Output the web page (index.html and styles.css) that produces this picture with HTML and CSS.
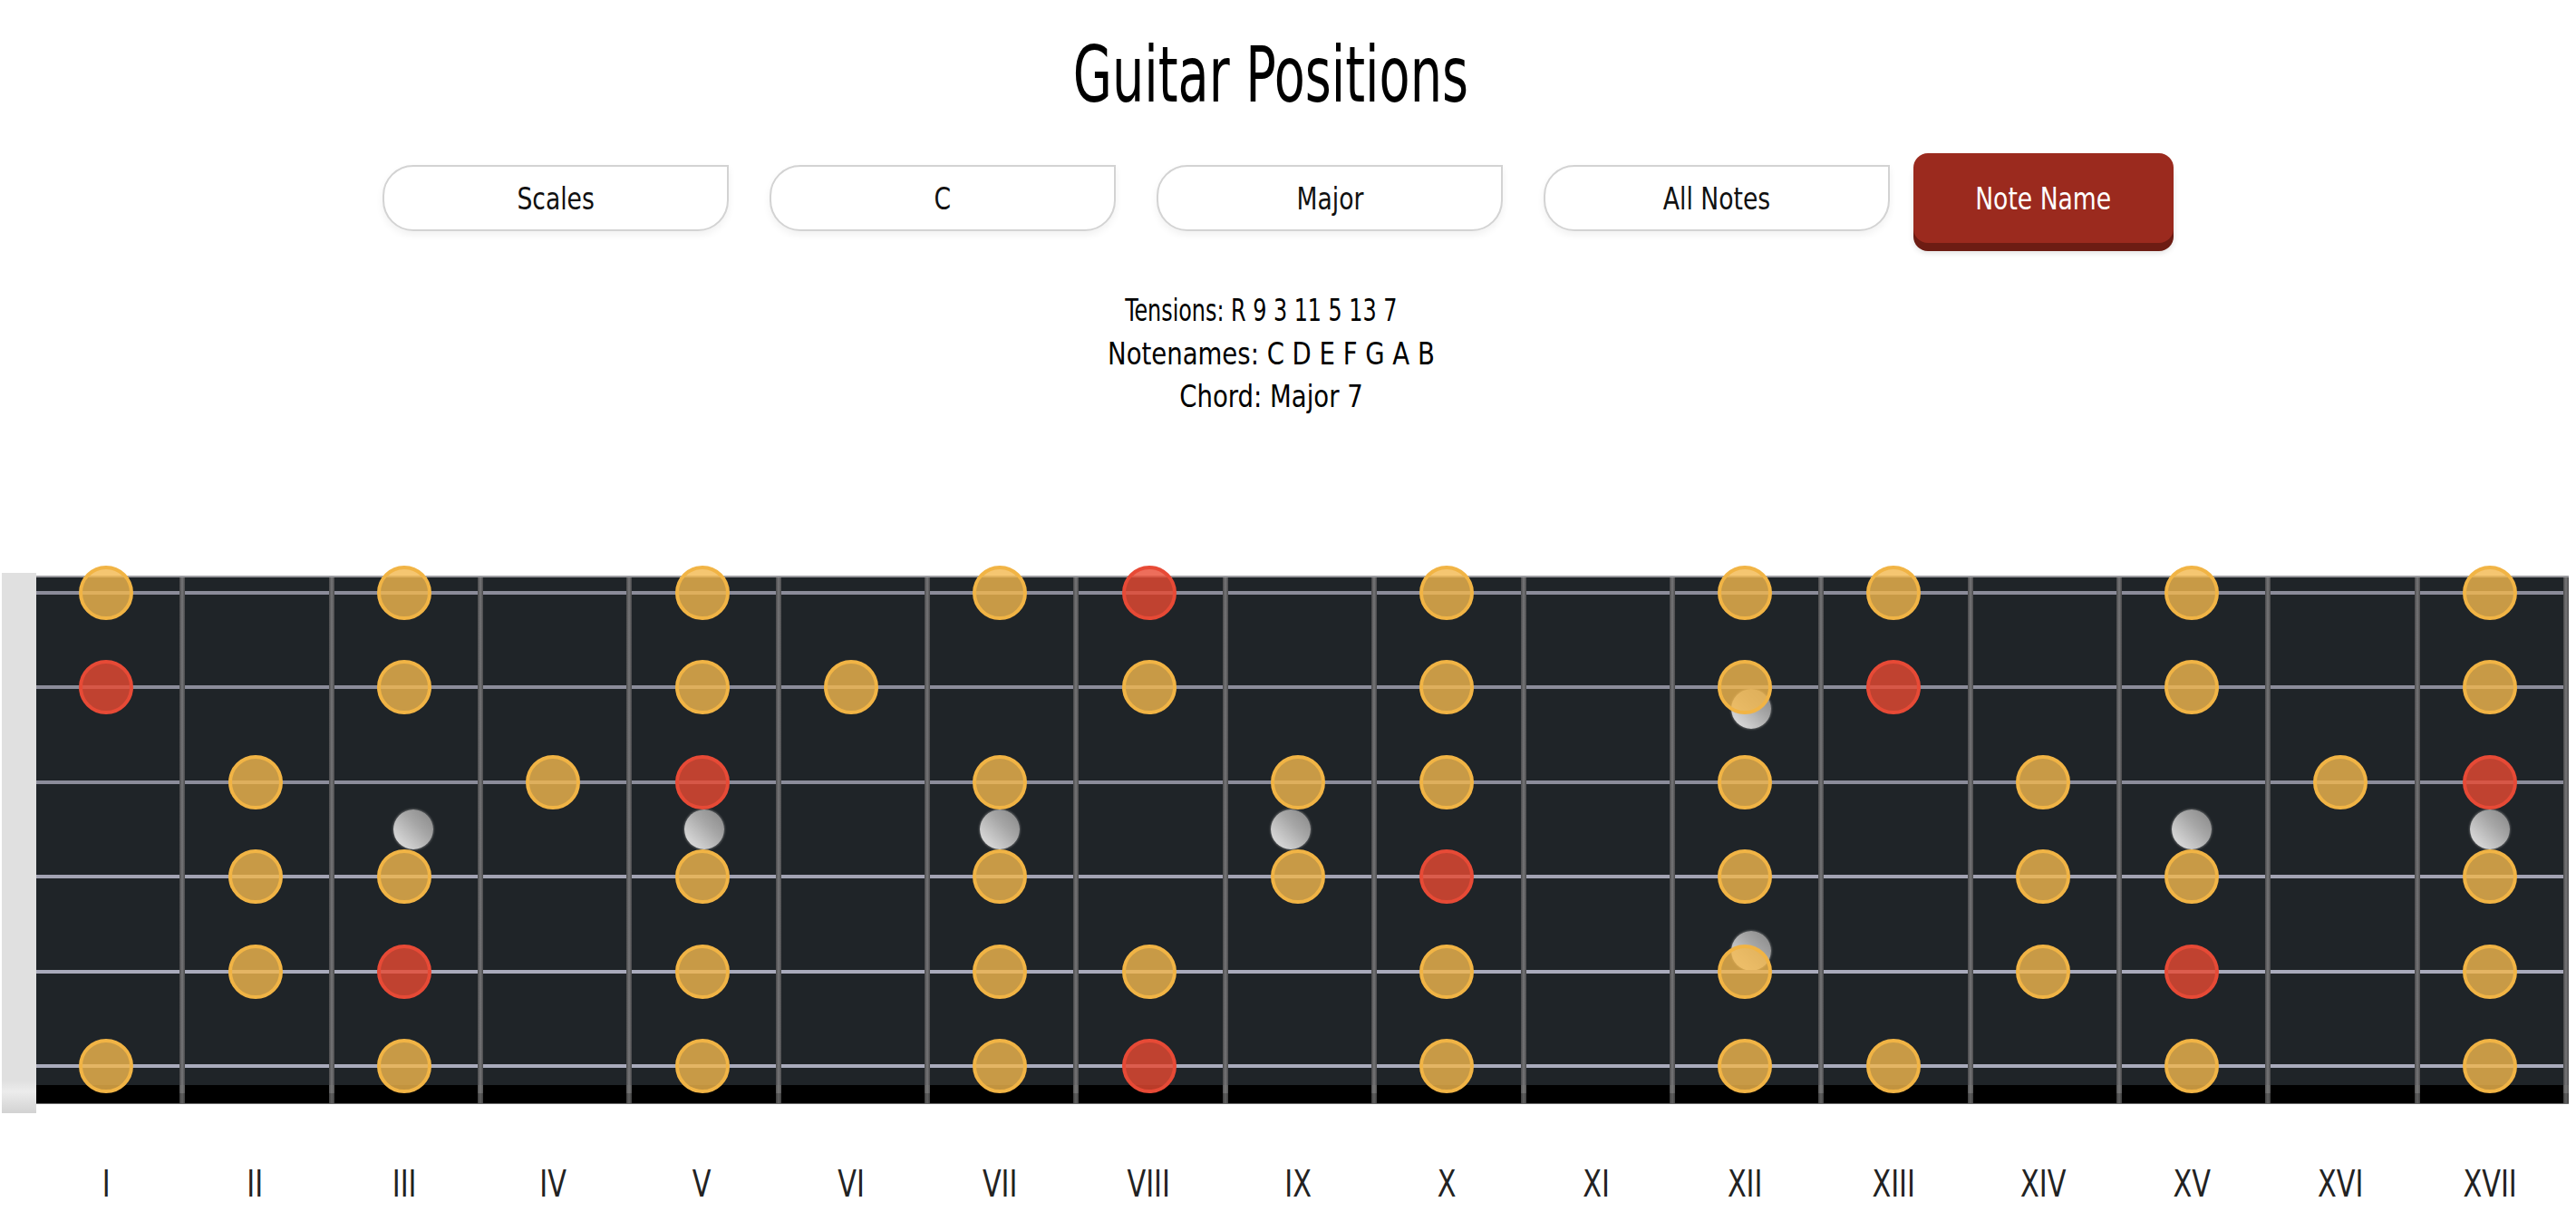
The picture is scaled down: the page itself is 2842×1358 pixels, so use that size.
FILE: index.html
```html
<!DOCTYPE html>
<html lang="en">
<head>
<meta charset="utf-8">
<title>Guitar Positions</title>
<link rel="stylesheet" href="styles.css">
</head>
<body>
<div class="top">
  <h1 class="title"><span class="sq">Guitar Positions</span></h1>
  <div class="controls">
    <button class="sel"><span class="sq">Scales</span></button>
    <button class="sel"><span class="sq">C</span></button>
    <button class="sel"><span class="sq">Major</span></button>
    <button class="sel"><span class="sq">All Notes</span></button>
    <button class="mode"><span class="sq">Note Name</span></button>
  </div>
  <div class="info">
    <div><span class="sq tight">Tensions: R 9 3 11 5 13 7</span></div>
    <div><span class="sq">Notenames: C D E F G A B</span></div>
    <div><span class="sq">Chord: Major 7</span></div>
  </div>
</div>

<div class="neck">
  <div class="nut"></div>
  <div class="board-wrap">
    <div class="board">
      <div class="row s1">
        <div class="c"><span class="dot"></span></div>
        <div class="c"></div>
        <div class="c"><span class="dot"></span></div>
        <div class="c"></div>
        <div class="c"><span class="dot"></span></div>
        <div class="c"></div>
        <div class="c"><span class="dot"></span></div>
        <div class="c"><span class="dot root"></span></div>
        <div class="c"></div>
        <div class="c"><span class="dot"></span></div>
        <div class="c"></div>
        <div class="c"><span class="dot"></span></div>
        <div class="c"><span class="dot"></span></div>
        <div class="c"></div>
        <div class="c"><span class="dot"></span></div>
        <div class="c"></div>
        <div class="c"><span class="dot"></span></div>
      </div>
      <div class="row s2">
        <div class="c"><span class="dot root"></span></div>
        <div class="c"></div>
        <div class="c"><span class="dot"></span></div>
        <div class="c"></div>
        <div class="c"><span class="dot"></span></div>
        <div class="c"><span class="dot"></span></div>
        <div class="c"></div>
        <div class="c"><span class="dot"></span></div>
        <div class="c"></div>
        <div class="c"><span class="dot"></span></div>
        <div class="c"></div>
        <div class="c"><span class="marker m-upper"></span><span class="dot"></span></div>
        <div class="c"><span class="dot root"></span></div>
        <div class="c"></div>
        <div class="c"><span class="dot"></span></div>
        <div class="c"></div>
        <div class="c"><span class="dot"></span></div>
      </div>
      <div class="row s3">
        <div class="c"></div>
        <div class="c"><span class="dot"></span></div>
        <div class="c"><span class="marker m-mid m-r10"></span></div>
        <div class="c"><span class="dot"></span></div>
        <div class="c"><span class="marker m-mid m-r2"></span><span class="dot root"></span></div>
        <div class="c"></div>
        <div class="c"><span class="marker m-mid"></span><span class="dot"></span></div>
        <div class="c"></div>
        <div class="c"><span class="marker m-mid m-l8"></span><span class="dot"></span></div>
        <div class="c"><span class="dot"></span></div>
        <div class="c"></div>
        <div class="c"><span class="dot"></span></div>
        <div class="c"></div>
        <div class="c"><span class="dot"></span></div>
        <div class="c"><span class="marker m-mid"></span></div>
        <div class="c"><span class="dot"></span></div>
        <div class="c"><span class="marker m-mid"></span><span class="dot root"></span></div>
      </div>
      <div class="row s4">
        <div class="c"></div>
        <div class="c"><span class="dot"></span></div>
        <div class="c"><span class="dot"></span></div>
        <div class="c"></div>
        <div class="c"><span class="dot"></span></div>
        <div class="c"></div>
        <div class="c"><span class="dot"></span></div>
        <div class="c"></div>
        <div class="c"><span class="dot"></span></div>
        <div class="c"><span class="dot root"></span></div>
        <div class="c"></div>
        <div class="c"><span class="marker m-lower"></span><span class="dot"></span></div>
        <div class="c"></div>
        <div class="c"><span class="dot"></span></div>
        <div class="c"><span class="dot"></span></div>
        <div class="c"></div>
        <div class="c"><span class="dot"></span></div>
      </div>
      <div class="row s5">
        <div class="c"></div>
        <div class="c"><span class="dot"></span></div>
        <div class="c"><span class="dot root"></span></div>
        <div class="c"></div>
        <div class="c"><span class="dot"></span></div>
        <div class="c"></div>
        <div class="c"><span class="dot"></span></div>
        <div class="c"><span class="dot"></span></div>
        <div class="c"></div>
        <div class="c"><span class="dot"></span></div>
        <div class="c"></div>
        <div class="c"><span class="dot"></span></div>
        <div class="c"></div>
        <div class="c"><span class="dot"></span></div>
        <div class="c"><span class="dot root"></span></div>
        <div class="c"></div>
        <div class="c"><span class="dot"></span></div>
      </div>
      <div class="row s6 last">
        <div class="c"><span class="dot"></span></div>
        <div class="c"></div>
        <div class="c"><span class="dot"></span></div>
        <div class="c"></div>
        <div class="c"><span class="dot"></span></div>
        <div class="c"></div>
        <div class="c"><span class="dot"></span></div>
        <div class="c"><span class="dot root"></span></div>
        <div class="c"></div>
        <div class="c"><span class="dot"></span></div>
        <div class="c"></div>
        <div class="c"><span class="dot"></span></div>
        <div class="c"><span class="dot"></span></div>
        <div class="c"></div>
        <div class="c"><span class="dot"></span></div>
        <div class="c"></div>
        <div class="c"><span class="dot"></span></div>
      </div>
    </div>
    <div class="band">
      <div></div><div></div><div></div><div></div><div></div><div></div>
      <div></div><div></div><div></div><div></div><div></div><div></div>
      <div></div><div></div><div></div><div></div><div></div>
    </div>
    <div class="labels">
      <span class="sq">I</span><span class="sq">II</span><span class="sq">III</span><span class="sq">IV</span><span class="sq">V</span>
      <span class="sq">VI</span><span class="sq">VII</span><span class="sq">VIII</span><span class="sq">IX</span><span class="sq">X</span>
      <span class="sq">XI</span><span class="sq">XII</span><span class="sq">XIII</span><span class="sq">XIV</span><span class="sq">XV</span>
      <span class="sq">XVI</span><span class="sq">XVII</span>
    </div>
  </div>
</div>
</body>
</html>
```

FILE: styles.css
```css
html, body {
  margin: 0;
  padding: 0;
  background: #ffffff;
}

body {
  font-family: "DejaVu Sans Condensed", "DejaVu Sans", sans-serif;
  color: #000;
}

/* narrow, rounded display face approximation */
.sq {
  display: inline-block;
  transform: scaleX(0.86);
  transform-origin: center;
}

.top {
  padding: 34px 38px 0 0;
}

.title {
  margin: 0;
  font-size: 86px;
  line-height: 96px;
  font-weight: 400;
  text-align: center;
}

.title .sq {
  transform: scaleX(0.72);
}

.controls {
  margin-top: 39px;
  height: 99px;
  padding-left: 16px;
  display: flex;
  justify-content: center;
  align-items: center;
  gap: 45px;
}

.controls button {
  font-family: inherit;
  font-size: 34px;
  cursor: pointer;
  box-sizing: border-box;
  padding: 0;
}

.controls .sq {
  transform: scaleX(0.87);
}

.sel {
  width: 382px;
  height: 73px;
  background: #fff;
  color: #111;
  border: 2px solid #d3d3d3;
  border-radius: 34px 0 34px 34px;
  box-shadow: 0 4px 8px rgba(0, 0, 0, 0.06);
}

.mode {
  margin-left: -19px;
  width: 287px;
  height: 99px;
  background: #9b2a1e;
  color: #fff;
  border: none;
  border-radius: 16px;
  box-shadow: 0 9px 0 #6d1c13, 0 11px 6px rgba(0, 0, 0, 0.12);
}

.info {
  margin-top: 51px;
  font-size: 34px;
  line-height: 47.5px;
  text-align: center;
}

.info .sq {
  transform: scaleX(0.9);
}

.info .sq.tight {
  transform: scaleX(0.78);
  margin-right: 22px;
}

/* ---------- neck ---------- */
.neck {
  margin-top: 170.5px;
  display: flex;
  align-items: flex-start;
  padding: 0 8px 0 2px;
}

.nut {
  width: 38px;
  height: 596px;
  flex: none;
  background: linear-gradient(to bottom, #e0e0e0 0, #e0e0e0 94%, #ececec 96%, #d2d2d2 100%);
}

.board-wrap {
  flex: 1;
  padding-top: 3px;
}

.board {
  border-top: 2px solid #9c9ca0;
  background: #1f2428;
}

.row {
  display: grid;
  grid-template-columns: repeat(17, 1fr);
  height: 104.4px;
}

.row.last {
  height: 38px;
}

.c {
  display: grid;
  padding-right: 10px;
  background-image:
    linear-gradient(to right, #4a4a4c, #767678 50%, #4a4a4c),
    linear-gradient(var(--str), var(--str));
  background-size: 6px 100%, 100% 4px;
  background-position: right top, 0 15px;
  background-repeat: no-repeat;
}

.s1, .s2, .s3 { --str: #8b8c9a; }
.s4 { --str: #a2a3b3; }
.s5, .s6 { --str: #a9abbc; }

.dot {
  grid-area: 1 / 1;
  justify-self: center;
  align-self: start;
  margin-top: -13px;
  width: 60px;
  height: 60px;
  box-sizing: border-box;
  border-radius: 50%;
  border: 4px solid #f1b445;
  background: rgba(242, 184, 77, 0.8);
}

.dot.root {
  border-color: #e74a36;
  background: rgba(232, 74, 50, 0.8);
}

.marker {
  grid-area: 1 / 1;
  justify-self: center;
  align-self: start;
  width: 44px;
  height: 44px;
  border-radius: 50%;
  background: linear-gradient(to bottom left, #858585 0%, #a6a6a6 40%, #d2d2d2 80%, #dcdcdc 100%);
  box-shadow: 0 0 2px 1px rgba(150, 150, 150, 0.45);
}

.m-mid { margin-top: 47px; }
.m-upper { margin-top: 19px; margin-left: 14px; }
.m-lower { margin-top: 77px; margin-left: 14px; }
.m-r10 { margin-left: 20px; }
.m-r2 { margin-left: 4px; }
.m-l8 { margin-right: 16px; }

.band {
  display: grid;
  grid-template-columns: repeat(17, 1fr);
  height: 20px;
  background: #000;
  border-bottom: 1px solid #6a6a6a;
}

.band div {
  background: linear-gradient(to right, rgba(90, 90, 90, 0.7), rgba(120, 120, 120, 0.8) 50%, rgba(90, 90, 90, 0.7)) right top / 6px 100% no-repeat;
}

.labels {
  margin-top: 64px;
  display: grid;
  grid-template-columns: repeat(17, 1fr);
  font-size: 41px;
  line-height: 48px;
  color: #222;
}

.labels span {
  text-align: center;
  margin-right: 10px;
}

.labels .sq {
  transform: scaleX(0.82);
}
```
